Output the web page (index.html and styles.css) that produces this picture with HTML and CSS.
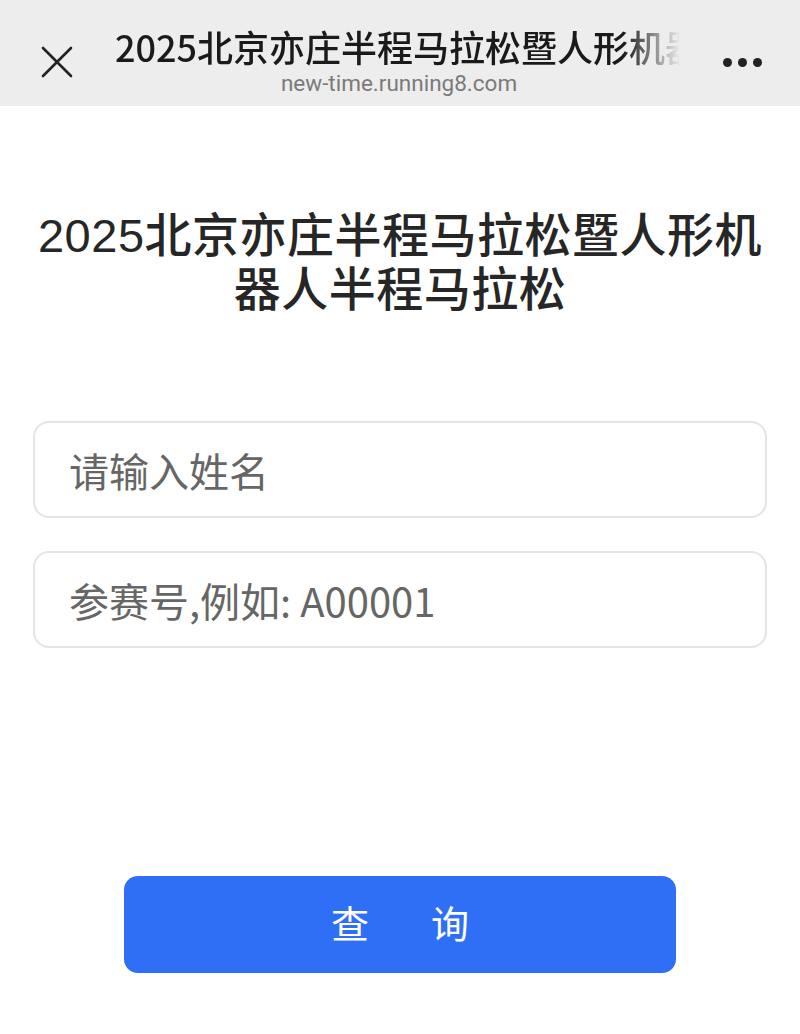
FILE: index.html
```html
<!DOCTYPE html>
<html lang="zh">
<head>
<meta charset="utf-8">
<link rel="stylesheet" href="styles.css">
</head>
<body>
<header class="topbar">
  <div class="close">
    <svg width="32" height="32" viewBox="0 0 32 32"><path d="M2 2 L30 30 M30 2 L2 30" stroke="#222" stroke-width="2.6" fill="none" stroke-linecap="round"/></svg>
  </div>
  <div class="titles">
    <div class="bar-title">2025北京亦庄半程马拉松暨人形机器人半程马拉松</div>
    <div class="bar-url">new-time.running8.com</div>
  </div>
  <div class="more"><span></span><span></span><span></span></div>
</header>
<main class="content">
  <h1 class="title">2025北京亦庄半程马拉松暨人形机<br>器人半程马拉松</h1>
  <div class="form">
    <input class="field" type="text" placeholder="请输入姓名">
    <input class="field" type="text" placeholder="参赛号,例如: A00001">
  </div>
  <button class="submit">查询</button>
</main>
</body>
</html>
```
FILE: styles.css
```css
* { box-sizing: border-box; }
html, body { margin: 0; padding: 0; }
body {
  width: 800px;
  height: 1034px;
  background: #ffffff;
  font-family: "Noto Sans CJK SC", "Noto Sans", sans-serif;
  color: #222;
  overflow: hidden;
}
.topbar {
  height: 106px;
  background: #ededed;
  display: flex;
  align-items: center;
  padding: 0 38px 0 41px;
}
.close {
  width: 32px;
  height: 32px;
  margin-top: 18px;
  flex: none;
}
.close svg { display: block; }
.titles {
  flex: 1;
  min-width: 0;
  margin-left: 42px;
  display: flex;
  flex-direction: column;
  align-items: center;
  padding-top: 14px;
}
.bar-title {
  width: 565px;
  align-self: flex-start;
  font-size: 36px;
  font-weight: 500;
  line-height: 46px;
  color: #1a1a1a;
  white-space: nowrap;
  overflow: hidden;
  -webkit-mask-image: linear-gradient(to right, #000 90%, transparent 100%);
  mask-image: linear-gradient(to right, #000 90%, transparent 100%);
}
.bar-url {
  font-family: "Roboto", "Noto Sans", sans-serif;
  font-size: 22.5px;
  line-height: 28px;
  color: #7a7a7a;
  margin-left: -8px;
}
.more {
  display: flex;
  gap: 6px;
  margin-left: 32px;
  margin-top: 18px;
  flex: none;
}
.more span {
  width: 9px;
  height: 9px;
  border-radius: 50%;
  background: #222;
}
.content {
  display: flex;
  flex-direction: column;
  align-items: center;
  padding: 103px 33px 0;
}
.title {
  margin: 0;
  font-family: "Liberation Sans", "Noto Sans CJK SC", sans-serif;
  font-size: 47px;
  font-weight: 500;
  line-height: 54px;
  letter-spacing: 0.5px;
  text-align: center;
  color: #262626;
  white-space: nowrap;
}
.form {
  width: 100%;
  display: flex;
  flex-direction: column;
  gap: 33px;
  margin-top: 104px;
}
.field {
  width: 100%;
  height: 97px;
  border: 2px solid #e4e4e4;
  border-radius: 16px;
  padding: 0 34px;
  font-family: "Noto Sans CJK SC", "Noto Sans", sans-serif;
  font-size: 40px;
  color: #333;
  background: #fff;
  outline: none;
}
.field::placeholder { color: #666; }
.submit {
  width: 552px;
  height: 97px;
  margin-top: 228px;
  border: none;
  border-radius: 14px;
  background: #2f6ff6;
  color: #fff;
  font-family: "Noto Sans CJK SC", "Noto Sans", sans-serif;
  font-size: 38px;
  line-height: 1;
  letter-spacing: 62px;
  text-indent: 62px;
  padding: 0 0 6px;
}
```
